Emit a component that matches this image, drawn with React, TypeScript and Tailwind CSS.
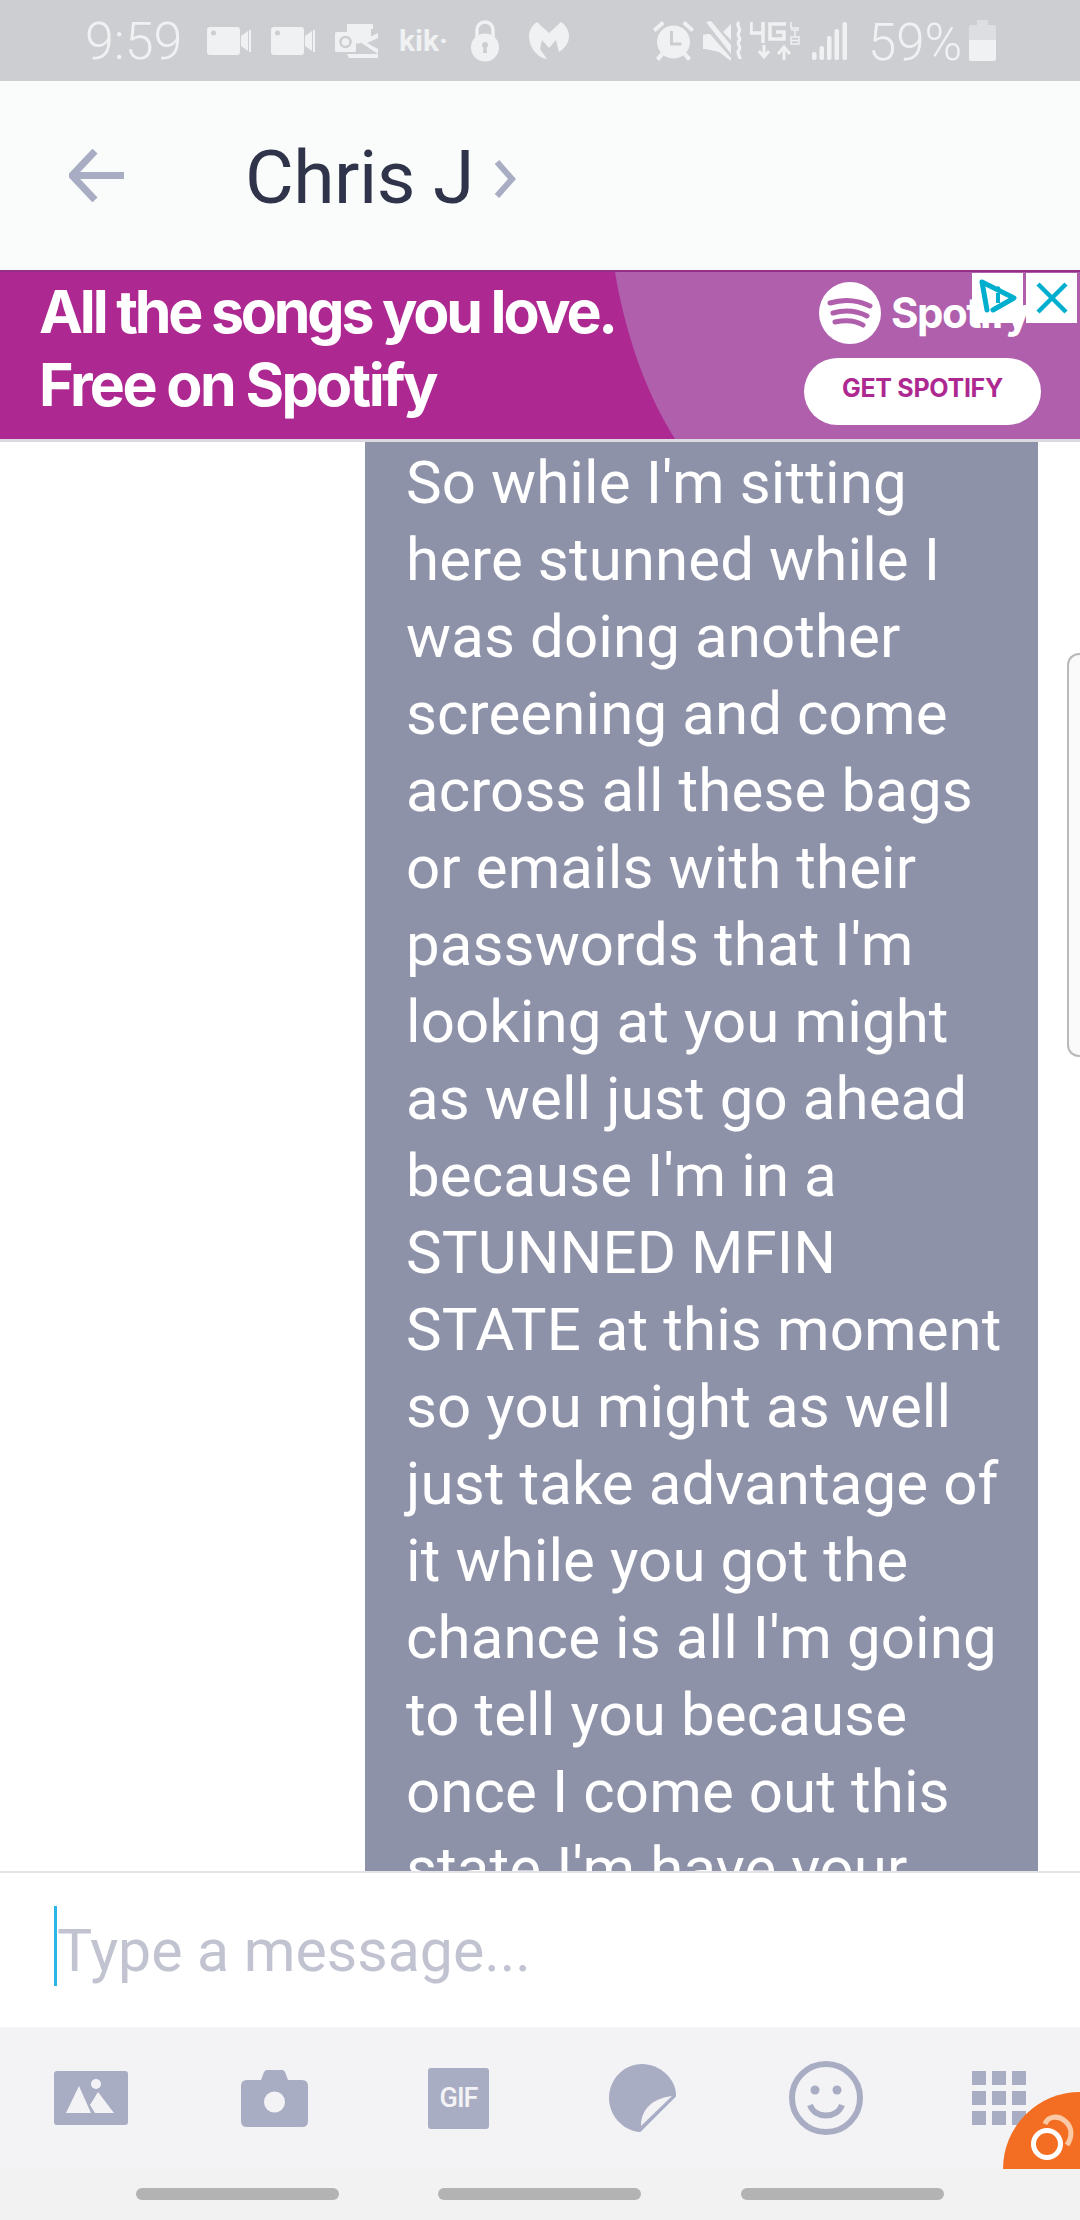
const LINES = [
  "So while I'm sitting",
  "here stunned while I",
  "was doing another",
  "screening and come",
  "across all these bags",
  "or emails with their",
  "passwords that I'm",
  "looking at you might",
  "as well just go ahead",
  "because I'm in a",
  "STUNNED MFIN",
  "STATE at this moment",
  "so you might as well",
  "just take advantage of",
  "it while you got the",
  "chance is all I'm going",
  "to tell you because",
  "once I come out this",
  "state I'm have your",
];

const SB = "#f0f1f2";
const IC = "#a9adc4";

function VideoIcon({ className = "" }: { className?: string }) {
  return (
    <svg width="44" height="28" viewBox="0 0 44 28" className={className}>
      <path d="M3 0h27a3 3 0 0 1 3 3v22a3 3 0 0 1-3 3H3a3 3 0 0 1-3-3V3a3 3 0 0 1 3-3z" fill={SB} />
      <circle cx="6.500" cy="6" r="2.500" fill="#cdced2" />
      <path d="M34 9l7-5v20l-7-5z" fill={SB} />
      <rect x="42" y="3" width="2" height="22" fill={SB} />
    </svg>
  );
}

function OutlookIcon() {
  return (
    <svg width="43" height="34" viewBox="0 0 43 34">
      <path d="M12 0h26v5H12z M12 5h24v8l-13 7-11-6z" fill={SB} />
      <rect x="0" y="8" width="21" height="20" rx="1.500" fill={SB} />
      <circle cx="10.500" cy="18" r="5" fill="none" stroke="#cdced2" strokeWidth="2.500" />
      <path d="M25 18l18-9v5l-11 5 11 6v5z" fill={SB} />
      <path d="M12 30h31v4H14z" fill={SB} />
    </svg>
  );
}

function LockIcon() {
  return (
    <svg width="28" height="42" viewBox="0 0 28 42">
      <path d="M6 18V10a8 8 0 0 1 16 0v8" fill="none" stroke={SB} strokeWidth="3.500" />
      <circle cx="14" cy="27.500" r="14" fill={SB} />
      <circle cx="14" cy="25" r="3" fill="#cdced2" />
      <path d="M12.800 26h2.400l1 7h-4.400z" fill="#cdced2" />
    </svg>
  );
}

function MalwareIcon() {
  return (
    <svg width="40" height="37" viewBox="0 0 40 37">
      <path d="M8 0l12 11L32 0c5 3 8 9 8 14 0 7-4 12-10 16l-3-12-7 8-7-8-2 9 7 10C9 36 0 26 0 14 0 9 3 3 8 0z" fill={SB} />
    </svg>
  );
}

function AlarmIcon() {
  return (
    <svg width="43" height="40" viewBox="0 0 43 40">
      <path d="M1 8L10 0l2.500 3-9 8zM42 8l-9-8-2.500 3 9 8z" fill={SB} />
      <path d="M9 31l-5 6 3 3 5-6zM34 31l5 6-3 3-5-6z" fill={SB} />
      <circle cx="21.500" cy="21" r="16.500" fill={SB} />
      <path d="M19.500 10v13h10" fill="none" stroke="#cdced2" strokeWidth="3" />
    </svg>
  );
}

function MuteVibIcon() {
  return (
    <svg width="40" height="40" viewBox="0 0 40 40">
      <path d="M0 14l4-1 3 0 21 24v3l-12-9-13-3H0z" fill={SB} />
      <path d="M3 1l5-1 20 24v9z" fill={SB} />
      <path d="M20 11l8-8v16z" fill={SB} />
      <path d="M36 1c-4 4 3 6 0 10s3 6 0 9 3 6 0 9 1 5 1 9" fill="none" stroke={SB} strokeWidth="3.200" />
    </svg>
  );
}

function NetIcon() {
  return (
    <div className="h-[40px] w-[50px]">
      <svg width="50" height="40" viewBox="0 0 50 40">
        <path d="M1 1v11h12M13 1v21" fill="none" stroke={SB} strokeWidth="3.500" />
        <path d="M36 3H20v15h14v-7h-8" fill="none" stroke={SB} strokeWidth="3.500" />
        <path d="M14 24v11M9 30l5 6 5-6" fill="none" stroke={SB} strokeWidth="3" />
        <path d="M34 39V27M28 33l6-7 6 7" fill="none" stroke={SB} strokeWidth="3" />
        <path d="M41 1v6h8M41 9h8M45 9v6M41 16h8v7h-8zM41 19.500h7" fill="none" stroke={SB} strokeWidth="1.500" />
      </svg>
    </div>
  );
}

function SignalIcon() {
  return (
    <svg width="35" height="38" viewBox="0 0 35 38">
      <rect x="0" y="30" width="4.500" height="8" rx="2" fill={SB} />
      <rect x="7.500" y="24" width="4.500" height="14" rx="2" fill={SB} />
      <rect x="15" y="14" width="4.500" height="24" rx="2" fill={SB} />
      <rect x="22.500" y="7" width="4.500" height="31" rx="2" fill={SB} />
      <rect x="30.500" y="0" width="4.500" height="38" rx="2" fill={SB} />
    </svg>
  );
}

function BatteryIcon() {
  return (
    <svg width="27" height="41" viewBox="0 0 27 41">
      <path d="M8 0h11v5h6a2 2 0 0 1 2 2v13H0V7a2 2 0 0 1 2-2h6z" fill="#dddee2" />
      <path d="M0 20h27v19a2 2 0 0 1-2 2H2a2 2 0 0 1-2-2z" fill={SB} />
    </svg>
  );
}

function StatusBar() {
  return (
    <div className="flex h-[81px] shrink-0 items-center justify-between bg-[#cdced2] pl-[85px] pr-[84px] text-[#f0f1f2]">
      <div className="flex items-center">
        <span className="mt-[3px] w-[93px] whitespace-nowrap font-['Roboto'] text-[52px] font-light leading-none">9:59</span>
        <VideoIcon className="ml-[29px]" />
        <VideoIcon className="ml-[20px]" />
        <div className="ml-[20px]"><OutlookIcon /></div>
        <span className="ml-[21px] w-[44px] whitespace-nowrap font-['Roboto'] text-[30px] font-bold leading-none">kik·</span>
        <div className="ml-[28px]"><LockIcon /></div>
        <div className="ml-[30px]"><MalwareIcon /></div>
      </div>
      <div className="flex items-center">
        <AlarmIcon />
        <div className="ml-[8px]"><MuteVibIcon /></div>
        <div className="ml-[7px]"><NetIcon /></div>
        <div className="ml-[12px]"><SignalIcon /></div>
        <span className="ml-[21px] mt-[3px] w-[90px] whitespace-nowrap font-['Roboto'] text-[51px] font-light leading-none">59%</span>
        <div className="ml-[11px]"><BatteryIcon /></div>
      </div>
    </div>
  );
}

function Header() {
  return (
    <div className="flex h-[189px] shrink-0 items-center bg-[#fafbfb] pl-[69px]">
      <svg width="55" height="53" viewBox="0 0 55 53">
        <path d="M55 26.500H4M26 2L3 26.500 26 51" fill="none" stroke={IC} strokeWidth="7" />
      </svg>
      <span className="ml-[121px] mt-[4px] w-[249px] whitespace-nowrap font-['Roboto'] text-[75px] font-normal leading-none tracking-[-0.500px] text-[#30344a]">Chris J</span>
      <svg width="22" height="38" viewBox="0 0 22 38" className="mt-[6px]">
        <path d="M3 2l15 17L3 36" fill="none" stroke={IC} strokeWidth="6" />
      </svg>
    </div>
  );
}

function Ad() {
  return (
    <div className="relative flex h-[172px] shrink-0 justify-between overflow-hidden border-b-[3px] border-t-2 border-b-[#dcd9e0] border-t-[#95308a] bg-[#ad2891]">
      <svg className="absolute inset-0 h-full w-full" viewBox="0 0 1080 167" preserveAspectRatio="none">
        <path d="M615 0C625 60 645 120 675 167H1080V0z" fill="#b05fad" />
      </svg>
      <div className="relative pl-[39px] pt-[3px] font-['Inter','Lato',sans-serif] text-[59px] font-bold leading-[73px] tracking-[-3.200px] text-white">
        <div className="whitespace-nowrap">All the songs you love.</div>
        <div className="whitespace-nowrap tracking-[-2.600px]">Free on Spotify</div>
      </div>
      <div className="relative mr-[39px] flex w-[237px] flex-col">
        <div className="mt-[10px] flex items-center pl-[15px]">
          <svg width="62" height="62" viewBox="0 0 62 62">
            <circle cx="31" cy="31" r="31" fill="#fff" />
            <path d="M11 21c13-4 28-3 40 3M14 31c11-3 24-2 34 3M16 40c9-2 20-2 28 3" fill="none" stroke="#b05fad" strokeWidth="5" strokeLinecap="round" />
          </svg>
          <span className="ml-[10px] whitespace-nowrap font-['Inter',sans-serif] text-[42px] font-bold leading-none tracking-[-1.500px] text-white">Spotify</span>
        </div>
        <div className="mt-[14px] flex h-[67px] items-center justify-center rounded-full bg-white pb-[5px] font-['Inter',sans-serif] text-[25px] font-bold tracking-[-0.300px] text-[#ad2891]">
          GET SPOTIFY
        </div>
      </div>
      <div className="absolute right-[3px] top-[1px] flex gap-[3px]">
        <div className="flex h-[50px] w-[51px] items-center justify-center bg-white">
          <svg width="40" height="40" viewBox="0 0 40 40">
            <path d="M9 32L4 4l32 16-21 12" fill="none" stroke="#00aecd" strokeWidth="5" strokeLinejoin="round" strokeLinecap="round" />
            <path d="M20 15v10" stroke="#00aecd" strokeWidth="4" />
            <circle cx="20" cy="10.500" r="2.200" fill="#00aecd" />
          </svg>
        </div>
        <div className="flex h-[50px] w-[51px] items-center justify-center bg-white">
          <svg width="32" height="32" viewBox="0 0 32 32">
            <path d="M2 2l28 28M30 2L2 30" stroke="#00aecd" strokeWidth="4.500" />
          </svg>
        </div>
      </div>
    </div>
  );
}

function Messages() {
  return (
    <div className="relative min-h-0 flex-1 overflow-hidden bg-white">
      <div className="ml-[365px] w-[673px] bg-[#8e92a9] pl-[41px] pt-[2px] font-['Roboto'] text-[60px] leading-[77px] tracking-[0.100px] text-white">
        {LINES.map((l) => (
          <div key={l} className="whitespace-nowrap">{l}</div>
        ))}
      </div>
      <div className="absolute right-0 top-[211px] h-[404px] w-[13px] rounded-l-[12px] border-y-2 border-l-2 border-[#b9b9b9] bg-[#fafafa]" />
    </div>
  );
}

function InputBar() {
  return (
    <div className="flex h-[156px] shrink-0 items-center border-t-2 border-[#e4e4e8] bg-white pb-[8px] pl-[54px]">
      <div className="h-[80px] w-[3px] bg-[#2bb5e6]" />
      <span className="mt-[8px] whitespace-nowrap font-['Roboto'] text-[59px] font-normal leading-none text-[#c2c3d0]">Type a message...</span>
    </div>
  );
}

function Toolbar() {
  return (
    <div className="relative flex h-[142px] shrink-0 items-center bg-[#f3f3f6] pl-[54px]">
      <svg width="74" height="54" viewBox="0 0 74 54">
        <rect width="74" height="54" rx="3" fill={IC} />
        <path d="M12 42l13-27 12 27z" fill="#f3f3f6" />
        <path d="M36 34l8-13 16 21H41z" fill="#f3f3f6" />
        <circle cx="42" cy="13" r="5" fill="#f3f3f6" />
      </svg>
      <svg width="67" height="57" viewBox="0 0 67 57" className="ml-[113px]">
        <path d="M20 10l3-8q1-2 3-2h15q2 0 3 2l3 8h14q6 0 6 6v35q0 6-6 6H6q-6 0-6-6V16q0-6 6-6z" fill={IC} />
        <circle cx="33.500" cy="32" r="10.500" fill="#f3f3f6" />
      </svg>
      <div className="ml-[120px] flex h-[61px] w-[61px] items-center justify-center rounded-[3px] bg-[#a9adc4] font-['Roboto'] text-[27px] font-medium leading-none tracking-[-1px] text-[#f3f3f6]">GIF</div>
      <svg width="67" height="68" viewBox="0 0 67 68" className="ml-[120px]">
        <path d="M30 68C13 66 0 51 0 34 0 15 15 0 33 0c18 0 34 15 34 31L30 68z" fill={IC} />
        <path d="M32 62c0-14 8-27 31-30z" fill="#f3f3f6" />
        <path d="M30 68l37-37" stroke={IC} strokeWidth="2" />
      </svg>
      <svg width="74" height="74" viewBox="0 0 74 74" className="ml-[113px]">
        <circle cx="37" cy="37" r="34" fill="none" stroke={IC} strokeWidth="6" />
        <circle cx="26" cy="29" r="4.500" fill={IC} />
        <circle cx="48" cy="29" r="4.500" fill={IC} />
        <path d="M21 44c5 14 27 14 32 0" fill="none" stroke={IC} strokeWidth="6" />
      </svg>
      <div className="ml-[109px] grid w-[54px] grid-cols-3 gap-[6px]">
        {Array.from({ length: 9 }).map((_, i) => (
          <div key={i} className="h-[14px] w-[14px] bg-[#a9adc4]" />
        ))}
      </div>
      <svg width="77" height="77" viewBox="0 0 77 77" className="absolute bottom-0 right-0">
        <path d="M77 0A77 77 0 0 0 0 77H77z" fill="#f36e22" />
        <circle cx="44" cy="52" r="13.500" fill="none" stroke="#fff" strokeWidth="5" />
        <path d="M42 32c3-8 13-9 20-3 7 6 8 15 2 24" fill="none" stroke="#fcc9a6" strokeWidth="5" />
      </svg>
    </div>
  );
}

function NavBar() {
  return (
    <div className="flex h-[51px] shrink-0 items-start bg-[#f2f2f3] pl-[136px] pt-[19px]">
      <div className="h-[12px] w-[203px] rounded-full bg-[#b3b3b3]" />
      <div className="ml-[99px] h-[12px] w-[203px] rounded-full bg-[#b3b3b3]" />
      <div className="ml-[100px] h-[12px] w-[203px] rounded-full bg-[#b3b3b3]" />
    </div>
  );
}

export default function App() {
  return (
    <div className="flex h-[2220px] w-[1080px] flex-col overflow-hidden bg-white">
      <StatusBar />
      <Header />
      <Ad />
      <Messages />
      <InputBar />
      <Toolbar />
      <NavBar />
    </div>
  );
}
